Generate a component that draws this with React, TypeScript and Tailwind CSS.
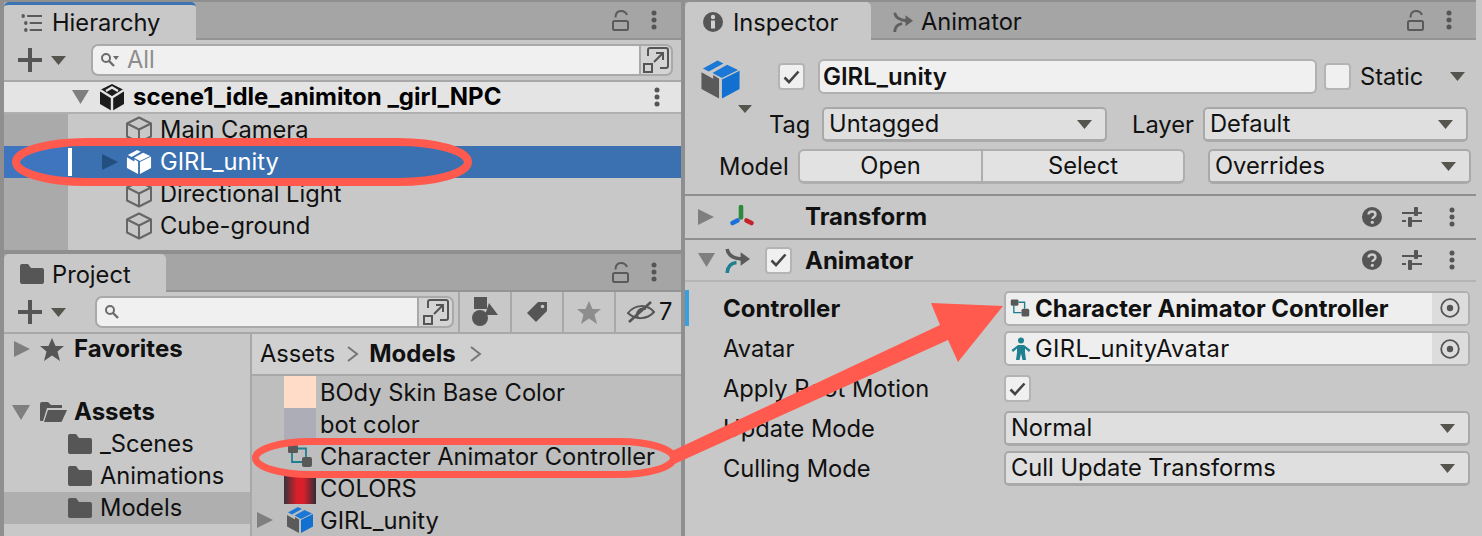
import React from "react";

const Tri = ({ dir = "down", color = "#55554d", w = 15, h = 9, className = "" }: { dir?: string; color?: string; w?: number; h?: number; className?: string }) => (
  <svg width={w} height={h} viewBox="0 0 10 10" preserveAspectRatio="none" className={`shrink-0 ${className}`}>
    <path d={dir === "down" ? "M0 0H10L5 10Z" : "M0 0L10 5L0 10Z"} fill={color} />
  </svg>
);

const Dots = ({ className = "" }: { className?: string }) => (
  <svg width="6" height="20" viewBox="0 0 6 20" className={`shrink-0 ${className}`}>
    <circle cx="3" cy="3" r="2.5" fill="#555" />
    <circle cx="3" cy="10" r="2.5" fill="#555" />
    <circle cx="3" cy="17" r="2.5" fill="#555" />
  </svg>
);

const Lock = ({ className = "" }: { className?: string }) => (
  <svg width="17" height="21" viewBox="0 0 17 21" fill="none" stroke="#5a5a5a" strokeWidth="2" className={`shrink-0 ${className}`}>
    <rect x="1" y="11" width="15" height="9" rx="1.5" />
    <path d="M3.5 7.5C3.5 3 6 1 9 1S14 2.5 15 5" />
  </svg>
);

const Cube = () => (
  <svg width="26" height="28" viewBox="0 0 26 28" fill="none" stroke="#666" strokeWidth="2" strokeLinejoin="round" className="shrink-0">
    <path d="M13 1.5L25 7.5V20.5L13 26.5L1 20.5V7.5Z" />
    <path d="M1 7.5L13 13.5L25 7.5M13 13.5V26.5" />
  </svg>
);

const ModelIcon = ({ white = false, size = 28 }: { white?: boolean; size?: number }) => {
  const top = white ? "#fff" : "#1b78d6";
  const left = white ? "#fff" : "#5a5a5a";
  const right = white ? "#fff" : "#1270d0";
  return (
    <svg width={size} height={size} viewBox="0 0 28 28" className="shrink-0">
      <path d="M1 9L9 13.5V11L13 13.5V27L1 20.5Z" fill={left} />
      <path d="M15 14L27 8V20.5L15 27Z" fill={right} />
      <path d="M2 6.5L12 1L16 3L6 8.5Z" fill={top} />
      <path d="M8.5 9.5L18.5 4L26 7.5L15 13Z" fill={top} />
    </svg>
  );
};

const FolderIcon = ({ w = 24, h = 20 }: { w?: number; h?: number }) => (
  <svg width={w} height={h} viewBox="0 0 24 20" className="shrink-0">
    <path d="M0 2Q0 0 2 0H8L11 4H22Q24 4 24 6V18Q24 20 22 20H2Q0 20 0 18Z" fill="#565656" />
  </svg>
);

const SearchIcon = ({ caret = false }: { caret?: boolean }) => (
  <svg width="22" height="16" viewBox="0 0 22 16" fill="none" className="shrink-0">
    <circle cx="6" cy="6" r="4" stroke="#6b6b6b" strokeWidth="2" />
    <path d="M9 9L14 14" stroke="#6b6b6b" strokeWidth="2.4" />
    {caret && <path d="M13 4H19L16 8Z" fill="#6b6b6b" />}
  </svg>
);

const PlusMenu = () => (
  <div className="flex items-center w-[73px] pl-[14px] shrink-0">
    <svg width="24" height="24" viewBox="0 0 24 24" className="shrink-0">
      <path d="M10 0H14V10H24V14H14V24H10V14H0V10H10Z" fill="#555" />
    </svg>
    <Tri className="ml-[9px]" />
  </div>
);

const ExpandButton = ({ className = "" }: { className?: string }) => (
  <div className={`flex items-center justify-center shrink-0 h-[32px] border-2 border-[#a9a9a9] bg-[#d4d4d4] rounded-r-[7px] ${className}`}>
    <svg width="26" height="26" viewBox="0 0 26 26" fill="none" stroke="#555" strokeWidth="2">
      <path d="M5 9V3Q5 1 7 1H23Q25 1 25 3V19Q25 21 23 21H17" />
      <rect x="1" y="17" width="8" height="8" />
      <path d="M11 15L20 6M13 6H20V13" />
    </svg>
  </div>
);

const Tab = ({ w, active = false, children }: { w: number; active?: boolean; children: React.ReactNode }) => (
  <div
    style={{ width: w }}
    className={`flex items-center shrink-0 ${active ? "bg-[#c8c8c8] rounded-t-[5px] h-[38px]" : "h-full"}`}
  >
    {children}
  </div>
);

const TabBar = ({ children }: { children: React.ReactNode }) => (
  <div className="flex items-start h-[38px] bg-[#a5a5a5] border-b-2 border-[#949494] shrink-0">
    {children}
    <div className="flex-1" />
    <div className="flex items-center h-[36px] pr-[24px]">
      <Lock />
      <Dots className="ml-[22px]" />
    </div>
  </div>
);

const TreeRow = ({ selected = false, icon, label }: { selected?: boolean; icon: React.ReactNode; label: string }) => (
  <div className={`flex items-center h-[32px] ${selected ? "bg-[#3b71b0] text-white" : "text-[#111]"}`}>
    <div className={`w-[64px] h-full shrink-0 ${selected ? "bg-[#3f74bf]" : "bg-[#aaaaaa]"}`} />
    {selected ? (
      <>
        <div className="w-[4px] h-[28px] bg-white shrink-0" />
        <Tri dir="right" color="#224f7e" w={16} h={16} className="ml-[30px]" />
        <div className="w-[8px] shrink-0" />
      </>
    ) : (
      <div className="w-[58px] shrink-0" />
    )}
    {icon}
    <span className="ml-[8px]">{label}</span>
  </div>
);

const FolderRow = ({ label, active = false }: { label: string; active?: boolean }) => (
  <div className={`flex items-center h-[32px] pl-[64px] ${active ? "bg-[#afafaf]" : ""}`}>
    <FolderIcon />
    <span className="ml-[8px]">{label}</span>
  </div>
);

const ControllerIcon = ({ size = 26 }: { size?: number }) => (
  <svg width={size} height={size} viewBox="0 0 26 26" fill="none" className="shrink-0">
    <path d="M11 5.5H19V14M5 10V19H15" stroke="#1f7f8f" strokeWidth="1.8" />
    <rect x="1" y="2" width="10" height="8" rx="1.5" fill="#585858" />
    <rect x="15" y="14" width="10" height="10" rx="2" fill="#585858" />
  </svg>
);

const AssetRow = ({ thumb, label, arrow = false }: { thumb: React.ReactNode; label: string; arrow?: boolean }) => (
  <div className="flex items-center h-[32px]">
    <div className="w-[32px] shrink-0 pl-[5px]">{arrow && <Tri dir="right" color="#7f7f7f" w={16} h={16} />}</div>
    <div className="w-[32px] h-[32px] shrink-0 flex items-center justify-center">{thumb}</div>
    <span className="ml-[4px] mt-[2px] whitespace-nowrap">{label}</span>
  </div>
);

const Chevron = ({ className = "" }: { className?: string }) => (
  <svg width="12" height="16" viewBox="0 0 12 16" fill="none" stroke="#777" strokeWidth="2" className={`shrink-0 ${className}`}>
    <path d="M1 1L10 8L1 15" />
  </svg>
);

const Check = ({ checked = false, className = "" }: { checked?: boolean; className?: string }) => (
  <div className={`w-[27px] h-[27px] shrink-0 rounded-[4px] border-2 border-[#b4b4b4] bg-[#f0f0f0] flex items-center justify-center ${className}`}>
    {checked && (
      <svg width="17" height="14" viewBox="0 0 17 14" fill="none" stroke="#444" strokeWidth="2.6">
        <path d="M1.5 7.5L6 12L15.5 1.5" />
      </svg>
    )}
  </div>
);

const Dropdown = ({ label, className = "" }: { label: string; className?: string }) => (
  <div className={`flex items-center justify-between h-[35px] rounded-[5px] border-2 border-[#a9a9a9] border-b-[3px] bg-[#dfdfdf] pl-[5px] pr-[13px] shrink-0 ${className}`}>
    <span>{label}</span>
    <Tri />
  </div>
);

const ObjectField = ({ icon, label, labelClass = "" }: { icon: React.ReactNode; label: string; labelClass?: string }) => (
  <div className="flex items-center w-[466px] h-[35px] rounded-[5px] border-2 border-[#b0b0b0] bg-[#eeeeee] overflow-hidden">
    <div className="w-[29px] pl-[4px] shrink-0 flex">{icon}</div>
    <span className={`flex-1 ${labelClass}`}>{label}</span>
    <div className="w-[36px] h-full bg-[#dcdcdc] flex items-center justify-center">
      <svg width="20" height="20" viewBox="0 0 20 20" fill="none">
        <circle cx="10" cy="10" r="8.8" stroke="#555" strokeWidth="1.8" />
        <circle cx="10" cy="10" r="3.2" fill="#555" />
      </svg>
    </div>
  </div>
);

const AnimatorIcon = ({ teal = "#1f7f8f", gray = "#5a5a5a", size = 24 }: { teal?: string; gray?: string; size?: number }) => (
  <svg width={size} height={size} viewBox="0 0 24 24" fill="none" className="shrink-0">
    <path d="M2 1C3 7 8 10 16 10.5" stroke={gray} strokeWidth="3.4" />
    <path d="M15 4L24 10.5L15 17Z" fill={gray} />
    <path d="M2 24C2.5 18 6 14.5 11 14" stroke={teal} strokeWidth="3.4" />
  </svg>
);

const SectionHeader = ({ open = false, icon, check = false, title, line, height, titleClass = "" }: { open?: boolean; icon: React.ReactNode; check?: boolean; title: string; line: string; height: string; titleClass?: string }) => (
  <div className={`flex items-center shrink-0 border-b-2 ${height} ${line}`}>
    <div className="w-[40px] pl-[13px] shrink-0 flex">
      {open ? <Tri color="#7f7f7f" w={17} h={14} /> : <Tri dir="right" color="#7f7f7f" w={16} h={16} />}
    </div>
    <div className="w-[28px] shrink-0 flex">{icon}</div>
    <div className="w-[52px] shrink-0 flex">{check && <Check checked className="ml-[12px]" />}</div>
    <span className={`font-bold text-[24px] ${titleClass}`}>{title}</span>
    <div className="flex-1" />
    <svg width="20" height="20" viewBox="0 0 20 20" className="shrink-0">
      <circle cx="10" cy="10" r="10" fill="#555" />
      <path d="M6.5 7.5C6.8 3.5 13.5 3.5 13.5 7.5C13.5 10 10.3 9.8 10.3 12" fill="none" stroke="#ccc" strokeWidth="2.4" />
      <circle cx="10.3" cy="15.3" r="1.6" fill="#ccc" />
    </svg>
    <svg width="20" height="20" viewBox="0 0 20 20" className="shrink-0 ml-[20px]" fill="#555">
      <rect x="0" y="5" width="20" height="2" />
      <rect x="12" y="0" width="4" height="9" rx="1" />
      <rect x="0" y="13" width="4" height="2" />
      <rect x="6" y="13" width="14" height="2" />
      <rect x="6" y="10" width="4" height="10" rx="1" />
    </svg>
    <Dots className="ml-[27px] mr-[21px]" />
  </div>
);

export default function App() {
  return (
    <div
      className="relative w-[1482px] h-[536px] overflow-hidden bg-[#c8c8c8] text-[23.7px] leading-none text-[#111]"
      style={{ fontFamily: "Inter, 'Noto Sans', sans-serif" }}
    >
      <div className="flex w-[1476px] h-[536px] bg-[#8f8f8f] pt-[2px] pl-[4px] gap-[4px]">
        {/* Left column */}
        <div className="flex flex-col w-[677px] shrink-0 gap-[4px]">
          {/* Hierarchy */}
          <section className="h-[248px] bg-[#c8c8c8] flex flex-col shrink-0 overflow-hidden">
            <TabBar>
              <Tab w={192} active>
                <div className="flex items-center h-full w-full pl-[17px] pt-[1px] border-t-[3px] border-[#3c74b2] rounded-t-[5px]">
                  <svg width="21" height="18" viewBox="0 0 24 18" preserveAspectRatio="none" className="shrink-0" fill="#5a5a5a">
                    <circle cx="2.5" cy="2" r="2" />
                    <rect x="7" y="1" width="17" height="2" />
                    <circle cx="5.5" cy="9" r="2" />
                    <rect x="10" y="8" width="14" height="2" />
                    <circle cx="5.5" cy="16" r="2" />
                    <rect x="10" y="15" width="14" height="2" />
                  </svg>
                  <span className="ml-[10px]">Hierarchy</span>
                </div>
              </Tab>
            </TabBar>
            <div className="flex items-center h-[42px] shrink-0 border-b-2 border-[#a8a8a8]">
              <PlusMenu />
              <div className="ml-[14px] flex items-center w-[548px] h-[32px] bg-[#f0f0f0] border-2 border-[#a9a9a9] border-r-0 rounded-l-[7px] pl-[7px]">
                <SearchIcon caret />
                <span className="ml-[5px] text-[#8d8d8d]">All</span>
              </div>
              <ExpandButton className="w-[34px]" />
            </div>
            <div className="flex items-center h-[32px] shrink-0 bg-[#e4e4e4] border-b-2 border-[#b0b0b0] pl-[68px] pr-[21px]">
              <Tri color="#7f7f7f" w={17} h={14} />
              <svg width="26" height="27" viewBox="0 0 26 27" className="ml-[10px] shrink-0">
                <path d="M13 0L25 6V20L13 27L1 20V6Z" fill="#1c1c1c" />
                <path d="M13 13.5V27M13 13.5L1 6M13 13.5L25 6M7 7L13 3.5L19 7" fill="none" stroke="#e4e4e4" strokeWidth="2.4" />
              </svg>
              <span className="ml-[8px] font-bold text-[24px] whitespace-nowrap text-black">scene1_idle_animiton _girl_NPC</span>
              <div className="flex-1" />
              <Dots />
            </div>
            <TreeRow icon={<Cube />} label="Main Camera" />
            <TreeRow selected icon={<ModelIcon white size={26} />} label="GIRL_unity" />
            <TreeRow icon={<Cube />} label="Directional Light" />
            <TreeRow icon={<Cube />} label="Cube-ground" />
            <div className="flex-1 flex">
              <div className="w-[64px] bg-[#aaaaaa]" />
            </div>
          </section>

          {/* Project */}
          <section className="flex-1 bg-[#c8c8c8] flex flex-col overflow-hidden">
            <TabBar>
              <Tab w={162} active>
                <div className="flex items-center h-full pl-[16px] pt-[2px]">
                  <FolderIcon />
                  <span className="ml-[8px] mt-[2px]">Project</span>
                </div>
              </Tab>
            </TabBar>
            <div className="flex items-center h-[42px] shrink-0 border-b-2 border-[#a8a8a8]">
              <PlusMenu />
              <div className="ml-[18px] flex items-center w-[322px] h-[32px] bg-[#f0f0f0] border-2 border-[#a9a9a9] border-r-0 rounded-l-[7px] pl-[7px]">
                <SearchIcon />
              </div>
              <ExpandButton className="w-[37px]" />
              <div className="w-[52px] ml-[4px] h-full flex items-center justify-center border-l-2 border-[#a8a8a8]">
                <svg width="26" height="30" viewBox="0 0 26 30" fill="#555">
                  <rect x="2" y="0" width="13" height="12" />
                  <path d="M17 6L26 18H13Z" />
                  <circle cx="8" cy="21" r="8" />
                </svg>
              </div>
              <div className="w-[52px] h-full flex items-center justify-center border-l-2 border-[#a8a8a8]">
                <svg width="22" height="22" viewBox="0 0 22 22">
                  <path d="M12 1H21V10L10 21L1 12Z" fill="#555" />
                  <circle cx="16.5" cy="5.5" r="1.8" fill="#c8c8c8" />
                </svg>
              </div>
              <div className="w-[52px] h-full flex items-center justify-center border-l-2 border-[#a8a8a8]">
                <svg width="24" height="23" viewBox="0 0 24 23">
                  <path d="M12 0L15.5 8H24L17.5 13.5L20 23L12 17.5L4 23L6.5 13.5L0 8H8.5Z" fill="#8d8d8d" />
                </svg>
              </div>
              <div className="flex-1 h-full flex items-center pl-[11px] border-l-2 border-[#a8a8a8]">
                <svg width="28" height="22" viewBox="0 0 28 22" fill="none" stroke="#555" strokeWidth="2" className="shrink-0">
                  <path d="M1 12C8 3 20 3 27 11C20 19 8 19 1 12Z" />
                  <path d="M11 17C8 11 13 6 19 8" />
                  <path d="M2 21L24 1" strokeWidth="2.6" />
                </svg>
                <span className="ml-[4px]">7</span>
              </div>
            </div>
            <div className="flex flex-1 min-h-0">
              <div className="w-[246px] shrink-0">
                <div className="flex items-center h-[30px] pl-[10px]">
                  <Tri dir="right" color="#7f7f7f" w={16} h={16} />
                  <svg width="24" height="23" viewBox="0 0 24 23" className="ml-[10px] shrink-0">
                    <path d="M12 0L15.5 8H24L17.5 13.5L20 23L12 17.5L4 23L6.5 13.5L0 8H8.5Z" fill="#555" />
                  </svg>
                  <span className="ml-[10px] font-bold text-[24px]">Favorites</span>
                </div>
                <div className="h-[32px]" />
                <div className="flex items-center h-[32px] pl-[8px]">
                  <Tri color="#7f7f7f" w={18} h={15} />
                  <svg width="27" height="20" viewBox="0 0 27 20" className="ml-[10px] shrink-0">
                    <path d="M0 2Q0 0 2 0H8L11 3H22V6H7L3 19H1Q0 19 0 18Z M8 8H27L22 19Q22 20 20 20H4Z" fill="#565656" />
                  </svg>
                  <span className="ml-[7px] font-bold text-[24px]">Assets</span>
                </div>
                <FolderRow label="_Scenes" />
                <FolderRow label="Animations" />
                <FolderRow label="Models" active />
              </div>
              <div className="flex-1 flex flex-col border-l-2 border-[#a8a8a8] min-w-0">
                <div className="flex items-center h-[42px] shrink-0 bg-[#d0d0d0] border-b-2 border-[#a8a8a8] pl-[8px]">
                  <span>Assets</span>
                  <Chevron className="ml-[12px]" />
                  <span className="ml-[10px] font-bold text-[24px]">Models</span>
                  <Chevron className="ml-[14px]" />
                </div>
                <div className="flex-1 bg-[#bebebe]">
                  <AssetRow thumb={<div className="w-[32px] h-[32px] bg-[#fedcc8]" />} label="BOdy Skin Base Color" />
                  <AssetRow thumb={<div className="w-[32px] h-[32px] bg-[#adadb8]" />} label="bot color" />
                  <AssetRow thumb={<ControllerIcon />} label="Character Animator Controller" />
                  <AssetRow
                    thumb={<div className="w-[32px] h-[32px] bg-[linear-gradient(90deg,#37323a,#d81f2a_40%,#d81f2a_62%,#2e2c36)]" />}
                    label="COLORS"
                  />
                  <AssetRow arrow thumb={<ModelIcon />} label="GIRL_unity" />
                </div>
              </div>
            </div>
          </section>
        </div>

        {/* Inspector */}
        <section className="flex-1 bg-[#c8c8c8] flex flex-col overflow-hidden">
          <TabBar>
            <Tab w={186} active>
              <div className="flex items-center h-full pl-[18px] pt-[2px]">
                <svg width="20" height="20" viewBox="0 0 20 20" className="shrink-0">
                  <circle cx="10" cy="10" r="10" fill="#555" />
                  <rect x="8" y="8.5" width="4" height="8" fill="#d0d0d0" />
                  <circle cx="10" cy="5" r="2.2" fill="#d0d0d0" />
                </svg>
                <span className="ml-[10px] mt-[1px]">Inspector</span>
              </div>
            </Tab>
            <div className="flex items-center h-[36px] pl-[22px] pt-[4px]">
              <AnimatorIcon size={20} gray="#5f5f5f" teal="#5f5f5f" />
              <span className="ml-[8px]">Animator</span>
            </div>
          </TabBar>
          <div className="flex items-start pt-[19px] h-[67px] shrink-0">
            <div className="relative ml-[15px] w-[78px] shrink-0">
              <ModelIcon size={41} />
              <Tri className="absolute left-[38px] top-[46px]" w={14} h={8} />
            </div>
            <Check checked className="mt-[4px]" />
            <div className="ml-[13px] flex items-center w-[499px] h-[35px] bg-[#f0f0f0] border-2 border-[#b0b0b0] rounded-[6px] pl-[3px] pt-[1px] font-semibold text-[24px]">
              GIRL_unity
            </div>
            <Check className="ml-[7px] mt-[4px]" />
            <span className="ml-[9px] mt-[6px] w-[66px] shrink-0">Static</span>
            <Tri className="ml-[24px] mt-[13px]" />
          </div>
          <div className="flex items-center h-[35px] shrink-0">
            <span className="ml-[84px] w-[53px] shrink-0">Tag</span>
            <Dropdown label="Untagged" className="w-[285px]" />
            <span className="ml-[25px] w-[71px] shrink-0">Layer</span>
            <Dropdown label="Default" className="w-[265px]" />
          </div>
          <div className="flex items-center h-[35px] shrink-0 mt-[7px]">
            <span className="ml-[34px] w-[79px] shrink-0">Model</span>
            <div className="flex items-center justify-center w-[185px] h-[35px] bg-[#e2e2e2] border-2 border-[#aeaeae] border-b-[3px] rounded-l-[6px]">Open</div>
            <div className="flex items-center justify-center w-[202px] h-[35px] bg-[#e2e2e2] border-2 border-l-0 border-[#aeaeae] border-b-[3px] rounded-r-[6px]">Select</div>
            <Dropdown label="Overrides" className="ml-[23px] w-[263px]" />
          </div>
          <div className="h-[12px] shrink-0 border-b-2 border-[#8f8f8f]" />
          <SectionHeader
            height="h-[44px]"
            icon={
              <svg width="28" height="24" viewBox="0 0 28 24" fill="none" strokeLinecap="round" strokeWidth="4.6" className="shrink-0 ml-[4px]">
                <path d="M12 2V12.5" stroke="#2c8a3d" />
                <path d="M3.5 18L8.5 15.5" stroke="#1a6fd8" />
                <path d="M17.5 15.5L22.5 18" stroke="#c4232b" />
              </svg>
            }
            title="Transform"
            line="border-[#8f8f8f]"
          />
          <SectionHeader
            height="h-[42px]"
            open
            check
            icon={<AnimatorIcon size={25} />}
            title="Animator"
            titleClass="mt-[2px]"
            line="border-[#b4b4b4]"
          />
          <div className="flex items-center h-[36px] shrink-0 mt-[8px]">
            <div className="w-[4px] h-full bg-[#3a9fe0] shrink-0" />
            <span className="ml-[34px] w-[281px] shrink-0 font-bold text-[24px] mt-[2px]">Controller</span>
            <ObjectField labelClass="font-bold text-[24px] mt-[2px]" icon={<ControllerIcon size={20} />} label="Character Animator Controller" />
          </div>
          <div className="flex items-center h-[35px] shrink-0 mt-[5px]">
            <span className="ml-[38px] w-[281px] shrink-0">Avatar</span>
            <ObjectField
              labelClass="tracking-[0.38px]"
              icon={
                <svg width="22" height="24" viewBox="0 0 22 24" fill="#1f8091" className="shrink-0">
                  <circle cx="11" cy="3.5" r="3" />
                  <path d="M8 8H14L20.5 13L19 15L15 11.5V15.5L16 23H12.5L11 16.5L9.5 23H6L7 15.5V11.5L3 15L1.5 13Z" />
                </svg>
              }
              label="GIRL_unityAvatar"
            />
          </div>
          <div className="flex items-center h-[27px] shrink-0 mt-[9px]">
            <span className="ml-[38px] w-[281px] shrink-0">Apply Root Motion</span>
            <Check checked />
          </div>
          <div className="flex items-center h-[35px] shrink-0 mt-[9px]">
            <span className="ml-[38px] w-[281px] shrink-0">Update Mode</span>
            <Dropdown label="Normal" className="w-[466px]" />
          </div>
          <div className="flex items-center h-[35px] shrink-0 mt-[5px]">
            <span className="ml-[38px] w-[281px] shrink-0">Culling Mode</span>
            <Dropdown label="Cull Update Transforms" className="w-[466px]" />
          </div>
        </section>
      </div>

      {/* Red annotations drawn on top of the screenshot */}
      <svg width="1482" height="536" viewBox="0 0 1482 536" className="absolute left-0 top-0 pointer-events-none">
        <rect x="16" y="142" width="452" height="40" rx="70" ry="20" fill="none" stroke="#ff5a4d" strokeWidth="8" />
        <rect x="255.5" y="441.5" width="418" height="33" rx="55" ry="16.5" fill="none" stroke="#ff5a4d" strokeWidth="7" />
        <path d="M940 325L931 303L1003 306L958 362L948 340L670 466L670 452Z" fill="#ff5a4d" />
      </svg>
    </div>
  );
}
